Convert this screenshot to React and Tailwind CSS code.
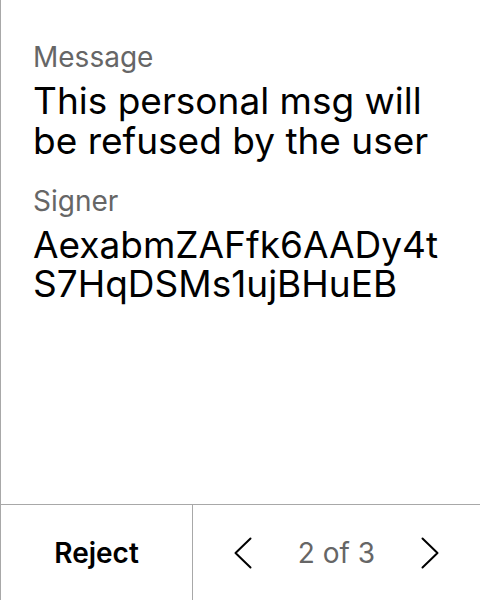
export default function App() {
  return (
    <div
      className="w-[480px] h-[600px] flex flex-col bg-white border-l border-[#a8a8a8] text-black"
      style={{ fontFamily: "Inter, 'Noto Sans', sans-serif" }}
    >
      <div className="flex-1 flex flex-col pl-8 pr-6 pt-10">
        <div className="text-[28px] leading-[34px] text-[#666666]">Message</div>
        <div className="mt-[7px] text-[37px] leading-[40px]">
          This personal msg will be refused by the user
        </div>
        <div className="mt-[23px] text-[28px] leading-[34px] text-[#666666]">Signer</div>
        <div className="mt-[7px] text-[37px] leading-[39px] break-all">
          AexabmZAFfk6AADy4tS7HqDSMs1ujBHuEB
        </div>
      </div>
      <div className="h-[96px] flex border-t border-[#a8a8a8]">
        <button className="w-[192px] flex items-center justify-center border-r border-[#a8a8a8] text-[28px] font-semibold">
          Reject
        </button>
        <div className="flex-1 flex items-center justify-between px-[41px]">
          <svg width="18" height="32" viewBox="0 0 18 32" fill="none" stroke="black" strokeWidth="2" strokeLinecap="round" strokeLinejoin="round">
            <path d="M16.5 1.5 L1.5 16 L16.5 30.5" />
          </svg>
          <span className="text-[28px] leading-[34px] text-[#666666]">2 of 3</span>
          <svg width="18" height="32" viewBox="0 0 18 32" fill="none" stroke="black" strokeWidth="2" strokeLinecap="round" strokeLinejoin="round">
            <path d="M1.5 1.5 L16.5 16 L1.5 30.5" />
          </svg>
        </div>
      </div>
    </div>
  );
}
